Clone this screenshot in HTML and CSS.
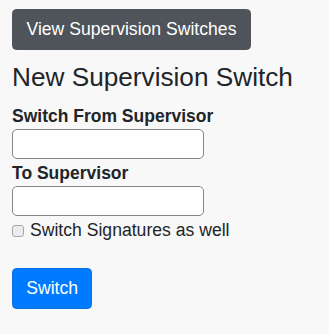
FILE: index.html
```html
<!DOCTYPE html>
<html>
<head>
<meta charset="utf-8">
<link rel="stylesheet" href="styles.css">
</head>
<body>
<div class="page">
  <button class="btn btn-dark" type="button">View Supervision Switches</button>
  <h4 class="title">New Supervision Switch</h4>
  <form class="form">
    <label class="field-label" for="from">Switch From Supervisor</label>
    <input class="text-input" id="from" type="text">
    <label class="field-label second" for="to">To Supervisor</label>
    <input class="text-input" id="to" type="text">
    <label class="check-row"><span class="check-box"></span><span class="check-text">Switch Signatures as well</span></label>
    <button class="btn btn-primary" type="button">Switch</button>
  </form>
</div>
</body>
</html>
```

FILE: styles.css
```css
html, body {
  margin: 0;
  padding: 0;
  background: #f8f8f8;
}
body {
  font-family: "Liberation Sans", Arial, sans-serif;
  color: #212529;
  font-size: 17.6px;
}
.page {
  padding: 9px 0 0 12px;
}
.btn {
  display: block;
  font-family: "Liberation Sans", Arial, sans-serif;
  font-size: 17.6px;
  line-height: 27px;
  padding: 5.5px 13.5px 6.5px;
  border: 1px solid transparent;
  border-radius: 4.5px;
  color: #fff;
  cursor: pointer;
}
.btn-dark {
  background: #4e545a;
  border-color: #4e545a;
}
.btn-primary {
  background: #007bff;
  border-color: #0a70e0;
  margin-top: 27px;
  padding-left: 13.2px;
  padding-right: 13.2px;
}
.title {
  margin: 11.5px 0 0;
  font-size: 26.2px;
  line-height: 31px;
  font-weight: 500;
}
.form {
  margin: 0;
}
.field-label {
  display: block;
  font-weight: bold;
  font-size: 17.5px;
  line-height: 21px;
  margin-top: 13px;
}
.field-label.second {
  margin-top: 3.5px;
}
.text-input {
  display: block;
  box-sizing: border-box;
  width: 192px;
  height: 30px;
  margin: 2.5px 0 0;
  border: 1px solid #858585;
  border-radius: 5px;
  background: #fff;
  padding: 0 4px;
  font-size: 16px;
}
.check-row {
  display: flex;
  align-items: center;
  margin-top: 3px;
  line-height: 22px;
  height: 22px;
}
.check-box {
  box-sizing: border-box;
  width: 12px;
  height: 12px;
  border: 1px solid #a8a8a8;
  border-radius: 3px;
  background: #ececec;
  margin-top: 1px;
}
.check-text {
  margin-left: 6px;
}
```
